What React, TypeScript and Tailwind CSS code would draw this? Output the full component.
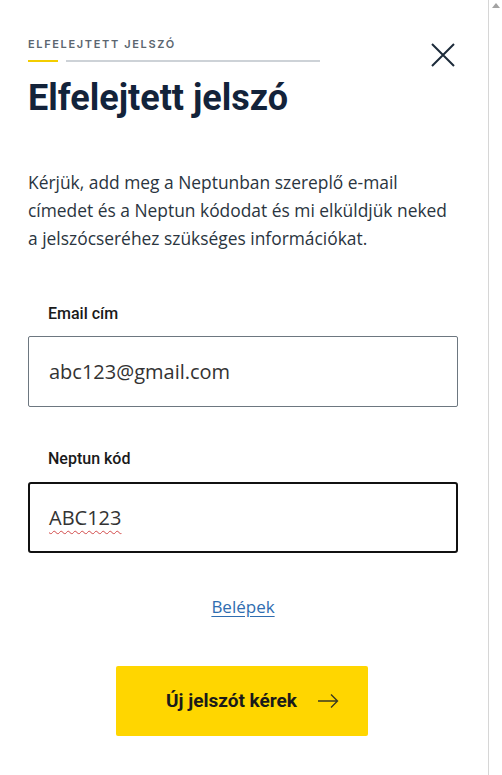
import React from 'react';

const App: React.FC = () => {
  return (
    <div className="flex h-[775px] w-[502px] bg-white overflow-hidden">
      {/* Main panel */}
      <div className="flex-1 flex flex-col pl-[28px] pr-[30px]">
        {/* Header row */}
        <div className="flex items-start justify-between pt-[36px]">
          <div className="w-[292px]">
            <div
              className="text-[11px] leading-[16px] tracking-[0.15em] font-semibold text-[#5b6670]"
              style={{ fontFamily: 'Inter, Roboto, sans-serif' }}
            >
              ELFELEJTETT JELSZÓ
            </div>
            <div className="flex items-center gap-[8px] mt-[8px]">
              <div className="h-[2px] w-[30px] bg-[#f3cd00]" />
              <div className="h-[2px] flex-1 bg-[#cdd2d7]" />
            </div>
          </div>
          <button className="mt-[6px] mr-[2px] text-[#1c2b3a]" aria-label="Bezárás">
            <svg width="26" height="26" viewBox="0 0 26 26" fill="none" stroke="currentColor" strokeWidth="2">
              <path d="M2 2 L24 24 M24 2 L2 24" />
            </svg>
          </button>
        </div>

        <h1
          className="mt-[7px] text-[36px] leading-[46px] font-bold text-[#13233a]"
          style={{ fontFamily: 'Roboto, sans-serif' }}
        >
          Elfelejtett jelszó
        </h1>

        <p
          className="mt-[47px] w-[428px] text-[17.4px] leading-[28px] text-[#2a3540]"
          style={{ fontFamily: '"Open Sans", sans-serif' }}
        >
          Kérjük, add meg a Neptunban szereplő e-mail címedet és a Neptun kódodat és mi elküldjük neked a
          jelszócseréhez szükséges információkat.
        </p>

        {/* Email */}
        <label
          className="mt-[52px] pl-[20px] text-[16px] leading-[20px] font-medium text-[#1a1a1a]"
          style={{ fontFamily: 'Roboto, sans-serif' }}
        >
          Email cím
        </label>
        <div
          className="mt-[12px] h-[71px] border border-[#6d7780] rounded-[2px] flex items-center pl-[20px] text-[20px] text-[#333]"
          style={{ fontFamily: '"Open Sans", sans-serif' }}
        >
          abc123@gmail.com
        </div>

        {/* Neptun */}
        <label
          className="mt-[42px] pl-[20px] text-[16px] leading-[20px] font-medium text-[#1a1a1a]"
          style={{ fontFamily: 'Roboto, sans-serif' }}
        >
          Neptun kód
        </label>
        <div
          className="mt-[13px] h-[71px] border-2 border-[#111] rounded-[3px] flex items-center pl-[19px] text-[20px] text-[#333]"
          style={{ fontFamily: '"Open Sans", sans-serif' }}
        >
          <span className="underline decoration-wavy decoration-[#d24a4a] decoration-1 underline-offset-[5px]">
            ABC123
          </span>
        </div>

        <div className="mt-[42px] flex justify-center">
          <a
            href="#"
            className="text-[17px] leading-[24px] text-[#2f6db0] underline underline-offset-[3px]"
            style={{ fontFamily: '"Open Sans", sans-serif' }}
          >
            Belépek
          </a>
        </div>

        <div className="mt-[47px] flex justify-center pr-[2px]">
          <button
            className="w-[252px] h-[70px] bg-[#ffd600] rounded-[2px] flex items-center justify-start pl-[50px] gap-[20px] text-[19px] font-bold text-[#1a1a1a]"
            style={{ fontFamily: 'Roboto, sans-serif' }}
          >
            <span>Új jelszót kérek</span>
            <svg width="22" height="16" viewBox="0 0 22 16" fill="none" stroke="#3a3a20" strokeWidth="1.4">
              <path d="M1 8 H20.5 M14 1.5 L20.5 8 L14 14.5" />
            </svg>
          </button>
        </div>
      </div>

      {/* Scrollbar */}
      <div className="w-[14px] border-l border-[#d6d6d6] flex flex-col items-center pt-[3px]">
        <svg width="8" height="5" viewBox="0 0 8 5" fill="#a3a3a3">
          <path d="M0 5 L4 0 L8 5 Z" />
        </svg>
      </div>
    </div>
  );
};

export default App;
